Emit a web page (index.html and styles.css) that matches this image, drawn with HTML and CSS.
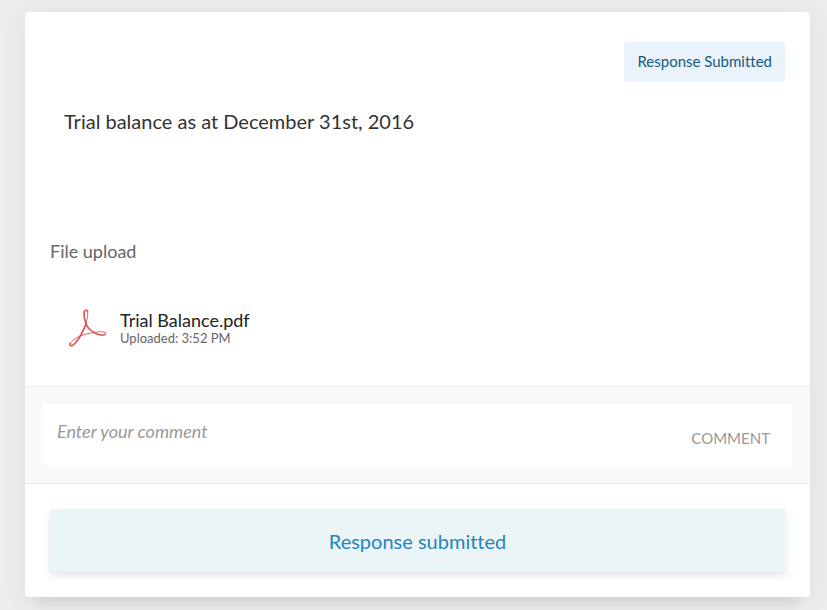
FILE: index.html
```html
<!DOCTYPE html>
<html lang="en">
<head>
<meta charset="utf-8">
<title>Trial balance request</title>
<link rel="stylesheet" href="styles.css">
</head>
<body>
<main class="card">
  <header class="card-header">
    <span class="badge">Response Submitted</span>
  </header>
  <h1 class="title">Trial balance as at December 31st, 2016</h1>
  <section class="files">
    <h2 class="files-heading">File upload</h2>
    <div class="file">
      <svg class="file-icon" viewBox="0 0 38 38" aria-hidden="true">
        <path class="stroke-bold" d="M18.600 2.200C18 .800 15.700 .900 15.200 3C14.600 6 15.800 11 17 15C18.500 18.500 21.500 21.500 25 23.500C28.500 25.600 33.500 26.800 36 25.600"/>
        <path class="stroke-bold" d="M17 15C15 20.500 12.500 25 10.500 28.500C8 32 5.500 35.500 3.300 36.500C1.500 37.200.700 36 1.300 34.500"/>
        <path class="stroke-fine" d="M18.600 2.200C19.300 6 17.800 11.500 17 15M1.300 34.500C2.500 31.500 6.500 29 11 27C16 25.200 20.500 24.200 25 23.500C29 22.700 35 22.300 36.800 23.700C37.400 24.300 37 25.200 36 25.600"/>
      </svg>
      <div class="file-text">
        <a class="file-name" href="#">Trial Balance.pdf</a>
        <span class="file-time">Uploaded: 3:52 PM</span>
      </div>
    </div>
  </section>
  <form class="comment">
    <div class="comment-box">
      <input class="comment-input" type="text" aria-label="Comment" placeholder="Enter your comment">
      <button class="comment-button" type="button">COMMENT</button>
    </div>
  </form>
  <footer class="card-footer">
    <button class="submit" type="button">Response submitted</button>
  </footer>
</main>
</body>
</html>
```

FILE: styles.css
```css
* {
  box-sizing: border-box;
}

body {
  margin: 0;
  padding: 12px 17px 13px 25px;
  background: #ececec;
  font-family: Lato, "Liberation Sans", sans-serif;
  font-variant-ligatures: none;
  color: #333;
}

button,
input {
  margin: 0;
  border: 0;
  font-family: inherit;
  font-variant-ligatures: inherit;
}

.card {
  background: #fff;
  border-radius: 4px;
  box-shadow: 0 18px 12px -12px rgba(0, 0, 0, 0.08), 0 4px 28px rgba(0, 0, 0, 0.06);
}

.card-header {
  display: flex;
  justify-content: flex-end;
  padding: 30px 25px 0;
}

.badge {
  padding: 9px 13px 11px;
  border-radius: 3px;
  background: #eaf3fb;
  color: #16597f;
  font-size: 15px;
  line-height: 20px;
}

.title {
  margin: 0;
  padding: 27px 39px 0;
  font-size: 20px;
  font-weight: 400;
  line-height: 24px;
}

.files {
  padding: 106px 25px 39px;
}

.files-heading {
  margin: 0;
  color: #666;
  font-size: 18px;
  font-weight: 400;
  line-height: 24px;
}

.file {
  display: flex;
  align-items: center;
  gap: 13px;
  padding: 46px 19px 0;
}

.file-icon {
  width: 38px;
  height: 38px;
  fill: none;
  stroke: #e05256;
  stroke-linecap: round;
  stroke-linejoin: round;
}

.stroke-bold {
  stroke-width: 1.7;
}

.stroke-fine {
  stroke-width: 0.9;
}

.file-text {
  display: flex;
  flex-direction: column;
}

.file-name {
  color: #222;
  font-size: 18px;
  line-height: 20px;
  text-decoration: none;
}

.file-time {
  color: #666;
  font-size: 13px;
  line-height: 16px;
}

.comment {
  padding: 17px;
  border-top: 1px solid #eaeaea;
  border-bottom: 1px solid #eaeaea;
  background: #f9f9f9;
}

.comment-box {
  display: flex;
  margin-left: 1px;
  background: #fff;
}

.comment-input {
  flex: 1;
  min-width: 0;
  height: 62px;
  padding: 0 14px 8px;
  background: none;
  font-size: 18px;
}

.comment-input::placeholder {
  color: #999;
  font-style: italic;
  opacity: 1;
}

.comment-button {
  padding: 6px 23px 0;
  background: none;
  color: #999;
  font-size: 15px;
}

.card-footer {
  padding: 25px;
}

.submit {
  display: block;
  width: 100%;
  padding: 20px 20px 19px;
  border-radius: 2px;
  background: #ebf4f6;
  box-shadow: 0 4px 8px rgba(0, 0, 0, 0.1);
  color: #2484c0;
  font-size: 20px;
  line-height: 24px;
}
```
